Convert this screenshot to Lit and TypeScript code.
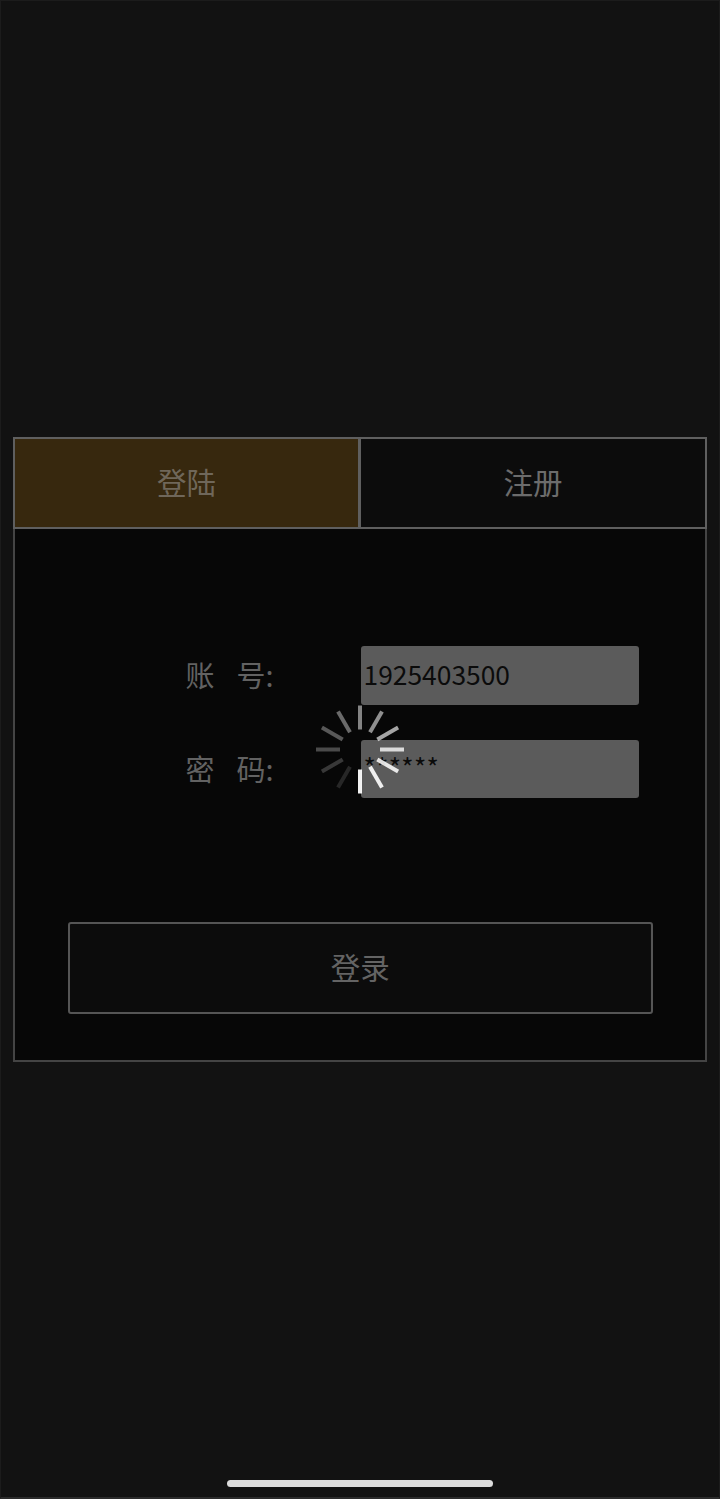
import { LitElement, html, css, svg } from "lit";
import { customElement } from "lit/decorators.js";

const TICKS = [
  [0, 0.5], [30, 0.55], [60, 0.64], [90, 0.78], [120, 0.86], [150, 0.9],
  [180, 0.95], [210, 0.13], [240, 0.2], [270, 0.27], [300, 0.33], [330, 0.4],
];

@customElement("app-root")
export class AppRoot extends LitElement {
  static styles = css`
    :host {
      display: block;
      width: 720px;
      height: 1499px;
      overflow: hidden;
      font-family: "Noto Sans CJK SC", "Noto Sans", sans-serif;
    }
    .page {
      position: relative;
      box-sizing: border-box;
      width: 720px;
      height: 1499px;
      padding: 436px 12px 0 12px;
      background: #121212;
      border: 1px solid #1c1c1c;
      border-bottom: 2px solid #2b2b2b;
    }
    .card {
      width: 694px;
      box-sizing: border-box;
      display: flex;
      flex-direction: column;
    }
    .tabs {
      display: flex;
      height: 92px;
      box-sizing: border-box;
      border: 2px solid #5f5f5f;
      background: #0c0c0c;
    }
    .tab {
      flex: 1;
      display: flex;
      align-items: center;
      justify-content: center;
      font-size: 29.5px;
      color: #6c6c6c;
      padding-bottom: 5px;
    }
    .tab.active {
      flex: none;
      width: 343px;
      background: #37280e;
      color: #6f675a;
      border-right: 3px solid #5f5f5f;
    }
    .body {
      box-sizing: border-box;
      height: 533px;
      border: 2px solid #444;
      border-top: none;
      background: #070707;
      padding: 117px 52px 0 52.5px;
      display: flex;
      flex-direction: column;
    }
    .fields {
      display: flex;
      flex-direction: column;
      gap: 35px;
      padding-left: 293.5px;
    }
    .row {
      position: relative;
      width: 278px;
      height: 58.5px;
    }
    .label {
      position: absolute;
      right: 100%;
      margin-right: 87.5px;
      top: 50%;
      transform: translateY(-50%);
      font-size: 29px;
      line-height: 40px;
      margin-top: -1px;
      color: #626262;
      white-space: pre;
      word-spacing: 4.5px;
    }
    .input {
      box-sizing: border-box;
      width: 278px;
      height: 58.5px;
      background: #5b5b5b;
      border-radius: 3px;
      padding-left: 2.5px;
      color: #0b0b0b;
      font-size: 26.4px;
      line-height: 56px;
    }
    .input.pw {
      line-height: 54px;
      letter-spacing: 0.3px;
    }
    .login {
      margin: 124px 0 0 0;
      height: 92px;
      box-sizing: border-box;
      border: 2px solid #555;
      border-radius: 3px;
      background: #0c0c0c;
      display: flex;
      align-items: center;
      justify-content: center;
      font-size: 29.5px;
      color: #646464;
      padding-bottom: 4px;
    }
    .spinner {
      position: absolute;
      left: 314px;
      top: 703px;
      width: 90px;
      height: 90px;
    }
    .home {
      position: absolute;
      left: 226px;
      bottom: 10px;
      width: 266px;
      height: 7px;
      border-radius: 4px;
      background: #dcdcdc;
    }
  `;

  render() {
    return html`
      <div class="page">
        <div class="card">
          <div class="tabs">
            <div class="tab active">登陆</div>
            <div class="tab">注册</div>
          </div>
          <div class="body">
            <div class="fields">
              <div class="row">
                <span class="label">账  号:</span>
                <div class="input">1925403500</div>
              </div>
              <div class="row">
                <span class="label">密  码:</span>
                <div class="input pw">******</div>
              </div>
            </div>
            <div class="login">登录</div>
          </div>
        </div>
        <svg class="spinner" viewBox="0 0 90 90">
          ${TICKS.map(
            ([a, o]) =>
              svg`<rect x="43" y="1.5" width="4" height="24" fill="#fff" opacity=${o} transform="rotate(${a} 45 45.5)"></rect>`
          )}
        </svg>
        <div class="home"></div>
      </div>
    `;
  }
}
